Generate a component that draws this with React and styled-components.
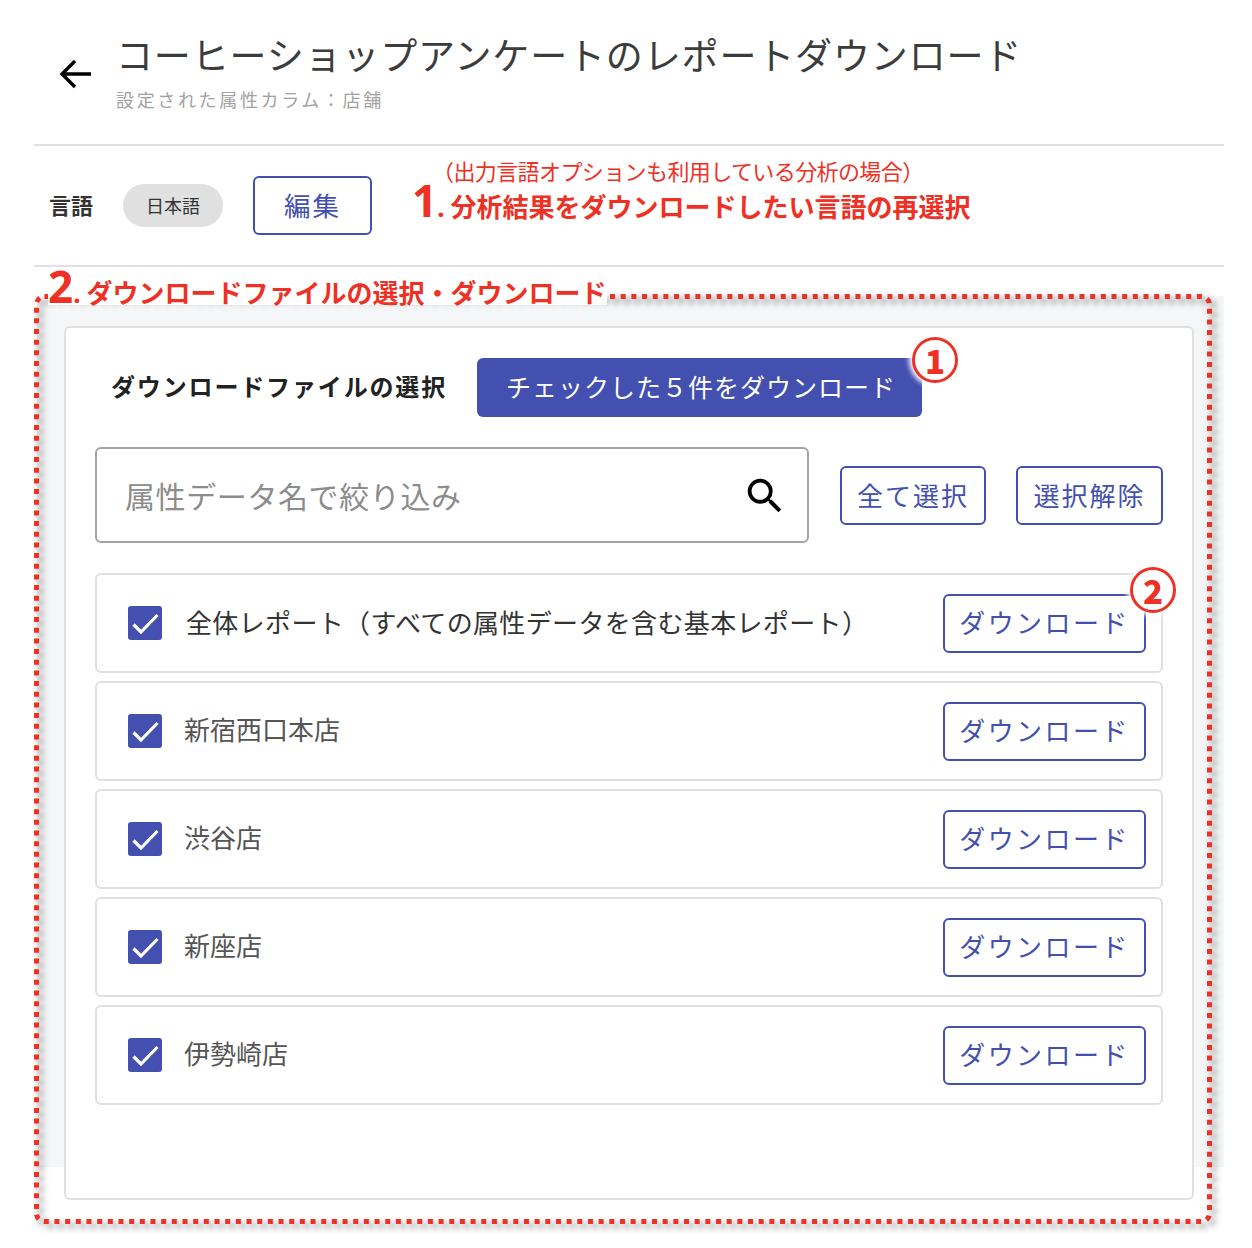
import React from 'react';
import styled, { createGlobalStyle } from 'styled-components';

const INDIGO = '#4350af';
const RED = '#ee3124';
const LINE = '#e0e0e0';

const GlobalStyle = createGlobalStyle`
	html, body {
		margin: 0;
		background: #fff;
		font-family: 'Noto Sans CJK JP', 'Noto Sans', sans-serif;
	}
	* {
		box-sizing: border-box;
	}
`;

const Page = styled.div`
	position: relative;
	width: 1252px;
	height: 1248px;
	padding: 0 28px 0 34px;
	overflow: hidden;
`;

const Header = styled.header`
	display: flex;
	align-items: flex-start;
	height: 146px;
	border-bottom: 2px solid ${LINE};
	padding: 31px 0 0 24px;
`;

const BackIcon = styled.svg`
	flex: none;
	width: 34px;
	height: 32px;
	margin-top: 27px;
	margin-right: 24px;
`;

const Titles = styled.div`
	display: flex;
	flex-direction: column;
`;

const Title = styled.h1`
	margin: 0;
	font-size: 37px;
	line-height: 46px;
	font-weight: 400;
	letter-spacing: 0.85px;
	color: #3c3c3c;
	white-space: nowrap;
`;

const Sub = styled.div`
	margin: 10px 0 0 0;
	font-size: 18px;
	line-height: 24px;
	letter-spacing: 2.65px;
	color: #a2a2a2;
`;

const LangRow = styled.section`
	display: flex;
	align-items: center;
	height: 121px;
	padding: 0 0 0 15px;
	border-bottom: 2px solid ${LINE};
`;

const LangLabel = styled.span`
	width: 74px;
	padding-bottom: 4px;
	font-size: 22px;
	font-weight: 700;
	color: #333;
`;

const Chip = styled.span`
	display: flex;
	align-items: center;
	justify-content: center;
	width: 100px;
	height: 43px;
	padding-bottom: 2px;
	border-radius: 22px;
	background: ${LINE};
	font-size: 18px;
	color: #333;
	margin-right: 30px;
`;

const OutlineButton = styled.button`
	flex: none;
	display: flex;
	align-items: center;
	justify-content: center;
	width: ${p => p.$w}px;
	height: 59px;
	padding: 0 0 ${p => p.$lift ?? 0}px;
	background: #fff;
	border: 2px solid ${INDIGO};
	border-radius: 6px;
	color: ${INDIGO};
	font-family: inherit;
	font-size: ${p => p.$size || 26}px;
	letter-spacing: ${p => p.$spacing ?? 2}px;
`;

const Panel = styled.section`
	height: 871px;
	margin-top: 29px;
	margin-left: 3px;
	padding: 30px 30px 0 27px;
	background: #f5f6f8;
`;

const Card = styled.div`
	height: 874px;
	background: #fff;
	border: 2px solid ${LINE};
	border-radius: 6px;
	padding: 29px 29px 0 29px;
`;

const CardHead = styled.div`
	display: flex;
	align-items: center;
	height: 60px;
	padding-left: 16px;
`;

const CardTitle = styled.h2`
	margin: 0 30px 3px 0;
	font-size: 24px;
	font-weight: 700;
	letter-spacing: 1.85px;
	color: #222;
	white-space: nowrap;
`;

const PrimaryButton = styled.button`
	width: 445px;
	height: 59px;
	padding: 0 0 2px 3px;
	border: 0;
	border-radius: 6px;
	background: ${INDIGO};
	color: #fff;
	font-family: inherit;
	font-size: 25px;
	letter-spacing: 1px;
`;

const FilterRow = styled.div`
	display: flex;
	align-items: center;
	margin-top: 30px;
`;

const SearchBox = styled.div`
	flex: none;
	display: flex;
	align-items: center;
	width: 714px;
	height: 96px;
	margin-right: 31px;
	padding: 0 19px 0 28px;
	border: 2px solid #a4a4a4;
	border-radius: 6px;
`;

const SearchInput = styled.input`
	flex: 1;
	min-width: 0;
	padding: 0;
	border: 0;
	outline: 0;
	background: transparent;
	font-family: inherit;
	font-size: 30px;
	letter-spacing: 0.6px;
	color: #333;
	&::placeholder {
		color: #8c8c8c;
		opacity: 1;
	}
`;

const SearchIcon = styled.svg`
	width: 46px;
	height: 46px;
	margin-top: 2px;
`;

const FilterButtons = styled.div`
	display: flex;
	gap: 30px;
`;

const List = styled.ul`
	list-style: none;
	margin: 30px 0 0;
	padding: 0;
	display: flex;
	flex-direction: column;
	gap: 8px;
`;

const Row = styled.li`
	display: flex;
	align-items: center;
	height: 100px;
	padding: 0 15px 0 31px;
	border: 2px solid ${LINE};
	border-radius: 6px;
`;

const Check = styled.span`
	flex: none;
	display: flex;
	width: 34px;
	height: 34px;
	border-radius: 3px;
	background: ${INDIGO};
`;

const RowLabel = styled.span`
	flex: 1;
	margin-left: ${p => (p.$main ? 24 : 22)}px;
	padding-bottom: ${p => (p.$main ? 4 : 6)}px;
	font-size: 26px;
	letter-spacing: ${p => (p.$main ? 0.35 : 0)}px;
	color: ${p => (p.$main ? '#333' : '#555')};
	white-space: nowrap;
`;

const Note = styled.div`
	position: absolute;
	color: ${RED};
	white-space: nowrap;
`;

const NoteSmall = styled(Note)`
	left: 432px;
	top: 154px;
	font-size: 22px;
	line-height: 32px;
	letter-spacing: -0.6px;
`;

const NoteMain = styled(Note)`
	display: flex;
	align-items: baseline;
	left: ${p => p.$left}px;
	top: ${p => p.$top}px;
	height: 38px;
	background: ${p => (p.$cover ? '#fff' : 'transparent')};
	font-size: 26px;
	line-height: 38px;
	font-weight: 700;
`;

const NoteNumber = styled.span`
	font-family: 'Noto Sans', sans-serif;
	font-size: 44px;
	font-weight: 700;
`;

const NoteDot = styled.span`
	font-family: 'Noto Sans', sans-serif;
	font-size: 26px;
	margin-right: 6px;
`;

const DashFrame = styled.svg`
	position: absolute;
	left: 26px;
	top: 286px;
	filter: drop-shadow(4px 4px 3px rgba(0, 0, 0, 0.5));
`;

const Badge = styled.span`
	position: absolute;
	left: ${p => p.$x - 23}px;
	top: ${p => p.$y - 23}px;
	display: flex;
	align-items: center;
	justify-content: center;
	width: 46px;
	height: 46px;
	border: 3px solid ${RED};
	border-radius: 50%;
	background: #fff;
	box-shadow: 0 0 5px 3px #fff;
	color: ${RED};
	font-size: 33px;
	line-height: 1;
	font-weight: 900;
`;

const stores = ['新宿西口本店', '渋谷店', '新座店', '伊勢崎店'];

const CheckMark = () => (
	<svg width="34" height="34" viewBox="0 0 34 34" fill="none">
		<path d="M5.5 18.5l7.5 7.5L29.5 9" stroke="#fff" strokeWidth="3.2" />
	</svg>
);

const FileRow = ({ label, main }) => (
	<Row>
		<Check>
			<CheckMark />
		</Check>
		<RowLabel $main={main}>{label}</RowLabel>
		<OutlineButton $w={203} $lift={4} $spacing={2.4}>
			ダウンロード
		</OutlineButton>
	</Row>
);

const App = () => (
	<Page>
		<GlobalStyle />
		<Header>
			<BackIcon viewBox="0 0 34 32" fill="none">
				<path d="M33 16H4M17 3L4 16l13 13" stroke="#000" strokeWidth="3.4" />
			</BackIcon>
			<Titles>
				<Title>コーヒーショップアンケートのレポートダウンロード</Title>
				<Sub>設定された属性カラム：店舗</Sub>
			</Titles>
		</Header>
		<LangRow>
			<LangLabel>言語</LangLabel>
			<Chip>日本語</Chip>
			<OutlineButton $w={119} $size={26.5} $spacing={2} $lift={2}>
				編集
			</OutlineButton>
		</LangRow>
		<Panel>
			<Card>
				<CardHead>
					<CardTitle>ダウンロードファイルの選択</CardTitle>
					<PrimaryButton>チェックした５件をダウンロード</PrimaryButton>
				</CardHead>
				<FilterRow>
					<SearchBox>
						<SearchInput placeholder="属性データ名で絞り込み" />
						<SearchIcon viewBox="0 0 24 24">
							<path
								fill="#000"
								d="M15.5 14h-.79l-.28-.27A6.47 6.47 0 0 0 16 9.5 6.5 6.5 0 1 0 9.5 16c1.61 0 3.09-.59 4.23-1.57l.27.28v.79l5 4.99L20.49 19l-4.99-5zm-6 0C7.01 14 5 11.99 5 9.5S7.01 5 9.5 5 14 7.01 14 9.5 11.99 14 9.5 14z"
							/>
						</SearchIcon>
					</SearchBox>
					<FilterButtons>
						<OutlineButton $w={146} $lift={2}>全て選択</OutlineButton>
						<OutlineButton $w={147} $lift={2}>選択解除</OutlineButton>
					</FilterButtons>
				</FilterRow>
				<List>
					<FileRow main label="全体レポート（すべての属性データを含む基本レポート）" />
					{stores.map(store => (
						<FileRow key={store} label={store} />
					))}
				</List>
			</Card>
		</Panel>

		<DashFrame width="1196" height="950" fill="none">
			<rect
				x="10.5"
				y="10.5"
				width="1173"
				height="925"
				rx="8"
				stroke={RED}
				strokeWidth="5"
				strokeDasharray="5 5.67"
			/>
		</DashFrame>
		<NoteSmall>（出力言語オプションも利用している分析の場合）</NoteSmall>
		<NoteMain $left={412} $top={181}>
			<NoteNumber>1</NoteNumber>
			<NoteDot>.</NoteDot>
			分析結果をダウンロードしたい言語の再選択
		</NoteMain>
		<NoteMain $left={48} $top={267} $cover>
			<NoteNumber>2</NoteNumber>
			<NoteDot>.</NoteDot>
			ダウンロードファイルの選択・ダウンロード
		</NoteMain>
		<Badge $x={935} $y={360}>1</Badge>
		<Badge $x={1153} $y={590}>2</Badge>
	</Page>
);

export default App;
